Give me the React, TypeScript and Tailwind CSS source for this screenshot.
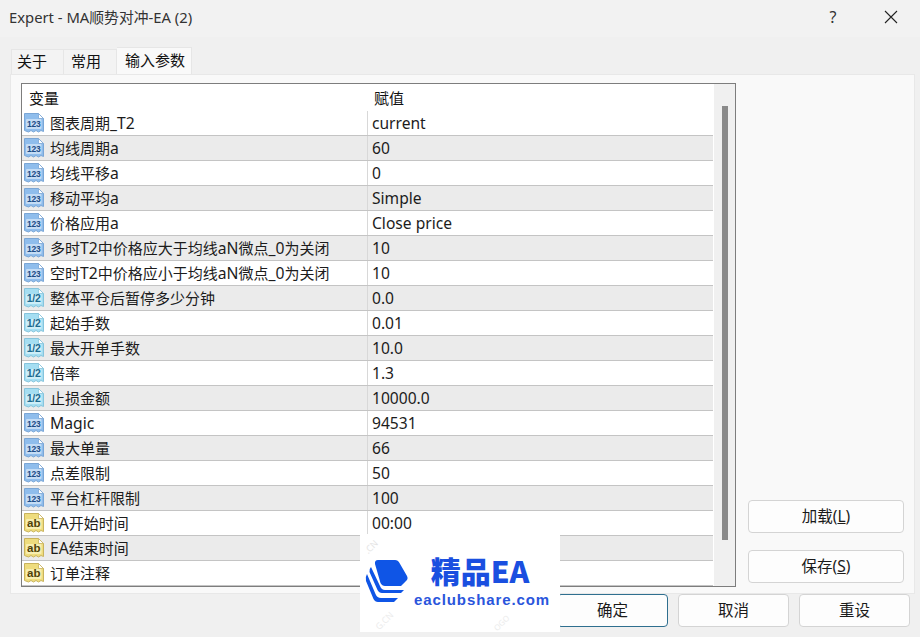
const FONT = "font-['Noto_Sans','Noto_Sans_CJK_SC',sans-serif]";

type Kind = "int" | "dbl" | "str";
const rows: [Kind, string, string][] = [
  ["int", "图表周期_T2", "current"],
  ["int", "均线周期a", "60"],
  ["int", "均线平移a", "0"],
  ["int", "移动平均a", "Simple"],
  ["int", "价格应用a", "Close price"],
  ["int", "多时T2中价格应大于均线aN微点_0为关闭", "10"],
  ["int", "空时T2中价格应小于均线aN微点_0为关闭", "10"],
  ["dbl", "整体平仓后暂停多少分钟", "0.0"],
  ["dbl", "起始手数", "0.01"],
  ["dbl", "最大开单手数", "10.0"],
  ["dbl", "倍率", "1.3"],
  ["dbl", "止损金额", "10000.0"],
  ["int", "Magic", "94531"],
  ["int", "最大单量", "66"],
  ["int", "点差限制", "50"],
  ["int", "平台杠杆限制", "100"],
  ["str", "EA开始时间", "00:00"],
  ["str", "EA结束时间", ""],
  ["str", "订单注释", ""],
];

const palette = {
  int: { fill: "#8fbdec", inner: "#c4dcf5", edge: "#7aa6d6", text: "#1d4c86", label: "123", size: 8.5 },
  dbl: { fill: "#a5def2", inner: "#cdeef8", edge: "#86c4dc", text: "#1d6a90", label: "1/2", size: 10.5 },
  str: { fill: "#eedc7e", inner: "#f7eeb0", edge: "#c9b35c", text: "#4f4208", label: "ab", size: 11.5 },
};

function TypeIcon({ kind }: { kind: Kind }) {
  const p = palette[kind];
  return (
    <svg width="22" height="22" viewBox="0 0 22 22" className="shrink-0">
      <path
        d="M1.5 1.5H15.5L20.5 6.5V19.5L18 18.5L15.5 20L13 18.5L10.5 20L8 18.5L5.5 20L1.5 18.5Z"
        fill={p.fill}
        stroke={p.edge}
        strokeWidth="1"
      />
      <path d="M15.5 1.5V6.5H20.5Z" fill="#ffffff" stroke={p.edge} strokeWidth="0.8" />
      <rect x="3" y="7" width="15.5" height="10" rx="1" fill={p.inner} />
      <text
        x="10.7"
        y="15.4"
        textAnchor="middle"
        fontSize={p.size}
        fontWeight="700"
        fill={p.text}
        fontFamily="Liberation Sans, sans-serif"
        letterSpacing={kind === "str" ? 0 : -0.2}
      >
        {p.label}
      </text>
    </svg>
  );
}

function Name({ text }: { text: string }) {
  const parts = text.split(/([A-Za-z0-9_]+)/).filter(Boolean);
  const hasLatin = /[A-Za-z]/.test(text);
  return (
    <span className={`text-[15px] text-[#1c1c1c] ${hasLatin ? "pt-[1px]" : ""}`}>
      {parts.map((part, i) =>
        /^[A-Za-z0-9_]+$/.test(part) ? (
          <span key={i} className="text-[15.7px]">{part}</span>
        ) : (
          <span key={i}>{part}</span>
        ),
      )}
    </span>
  );
}

function Btn({ children, className = "" }: { children: React.ReactNode; className?: string }) {
  return (
    <div className={`h-[33px] flex items-center justify-center rounded-[4px] bg-[#fdfdfd] border border-[#d4d4d4] text-[15.5px] text-[#1a1a1a] ${className}`}>
      {children}
    </div>
  );
}

function Logo() {
  return (
    <div className="absolute left-[360px] top-[534px] w-[200px] h-[98px] bg-white overflow-hidden">
      <span className="absolute left-[4px] top-[8px] -rotate-45 text-[9px] leading-[10px] text-[#e4e4e4]">.CN</span>
      <span className="absolute left-[14px] top-[82px] -rotate-45 text-[9px] leading-[10px] text-[#ececec]">G.CN</span>
      <span className="absolute left-[132px] top-[84px] -rotate-45 text-[8px] leading-[9px] text-[#ececec]">OGO</span>
      <div className="flex items-center pl-[5px] pt-[20px]">
        <svg width="44" height="48" viewBox="0 0 44 48" className="shrink-0">
          <path d="M13 3H30Q33 3 34.5 6L42 19Q43.5 22 41 24L36 29H20Q17 29 15.5 26L10 7Q9.5 3 13 3Z" fill="#0f55e6" />
          <path d="M6 10L15 29Q16.5 33 20 33H39L36 36H17Q14 36 12.5 33L4.5 15Q4 12 6 10Z" fill="#0f55e6" />
          <path d="M2 17L10.5 37Q12 41 16 41H33L29 45H13Q10 45 8.5 42L1 24Q0 20 2 17Z" fill="#0f55e6" />
        </svg>
        <div className="flex flex-col items-center ml-[5px] w-[136px]">
          <div className="text-[30px] leading-[32px] font-black text-[#1a4fe0] font-['Noto_Sans_CJK_SC',sans-serif] whitespace-nowrap -ml-[4px]">精品EA</div>
          <div className="text-[15px] leading-[17px] mt-[5px] font-bold text-[#2a55dc] font-['Liberation_Sans',sans-serif] tracking-[0.9px] whitespace-nowrap">eaclubshare.com</div>
        </div>
      </div>
    </div>
  );
}

export default function App() {
  return (
    <div className={`relative w-[920px] h-[637px] overflow-hidden bg-[#f0f0f0] text-[#111] ${FONT}`}>
      <div className="h-[37px] flex items-center pl-[9px] pb-[3px] bg-[#f2f2f2]">
        <span className="text-[14.8px] text-[#333] flex-1">Expert - MA顺势对冲-EA (2)</span>
        <span className="w-[16px] text-[16px] text-[#333] mr-[43px] text-center">?</span>
        <svg width="14" height="14" viewBox="0 0 14 14" className="mr-[22px]">
          <path d="M1 1L13 13M13 1L1 13" stroke="#222" strokeWidth="1.1" />
        </svg>
      </div>

      <div className="h-[37px] flex items-end pl-[11px] text-[15px]">
        <div className="w-[53px] h-[25px] flex items-center pl-[5px] pb-[2px] bg-[#f3f3f3] border border-b-0 border-[#e6e6e6]">关于</div>
        <div className="w-[53px] h-[25px] flex items-center pl-[7px] pb-[2px] bg-[#f3f3f3] border border-l-0 border-b-0 border-[#e6e6e6]">常用</div>
        <div className="w-[75px] h-[27px] flex items-center pl-[8px] pb-[2px] bg-[#f9f9f9] border border-l-0 border-b-0 border-[#e6e6e6]">输入参数</div>
      </div>

      <div className="ml-[10px] w-[905px] h-[520px] bg-[#f9f9f9] border border-[#e8e8e8] flex pl-[10px] pt-[8px]">
        <div className="w-[715px] h-[504px] border border-[#7d7d7d] bg-white flex shrink-0">
          <div className="w-[692px] flex flex-col">
            <div className="h-[27px] flex items-center pt-[2px] text-[15px]">
              <div className="w-[346px] pl-[7px]">变量</div>
              <div className="pl-[6px]">赋值</div>
            </div>
            {rows.map(([kind, name, value], i) => (
              <div
                key={i}
                className={`h-[25px] flex items-center border-b border-[#c4c4c4] ${i % 2 ? "bg-[#ebebeb]" : "bg-white"}`}
              >
                <div className="w-[346px] h-full flex items-center pl-[1px] gap-[5px] border-r border-[#d8d8d8] whitespace-nowrap">
                  <TypeIcon kind={kind} />
                  <Name text={name} />
                </div>
                <div className="pl-[4px] pt-[1px] text-[15.6px] text-[#1c1c1c]">{value}</div>
              </div>
            ))}
          </div>
          <div className="w-[21px] ml-[1px] bg-[#f0f0f0] pt-[22px] flex justify-center">
            <div className="w-[6px] h-[434px] ml-[1px] bg-[#8a8a8a]" />
          </div>
        </div>
        <div className="ml-[12px] w-[156px] h-[500px] flex flex-col justify-end gap-[17px]">
          <Btn>
            <span>加载(<span className="underline">L</span>)</span>
          </Btn>
          <Btn>
            <span>保存(<span className="underline">S</span>)</span>
          </Btn>
        </div>
      </div>

      <div className="flex justify-end gap-[10px] pr-[10px]">
        <Btn className="w-[111px] !border-[#2f6f8f]">确定</Btn>
        <Btn className="w-[111px]">取消</Btn>
        <Btn className="w-[111px]">重设</Btn>
      </div>

      <Logo />
    </div>
  );
}
